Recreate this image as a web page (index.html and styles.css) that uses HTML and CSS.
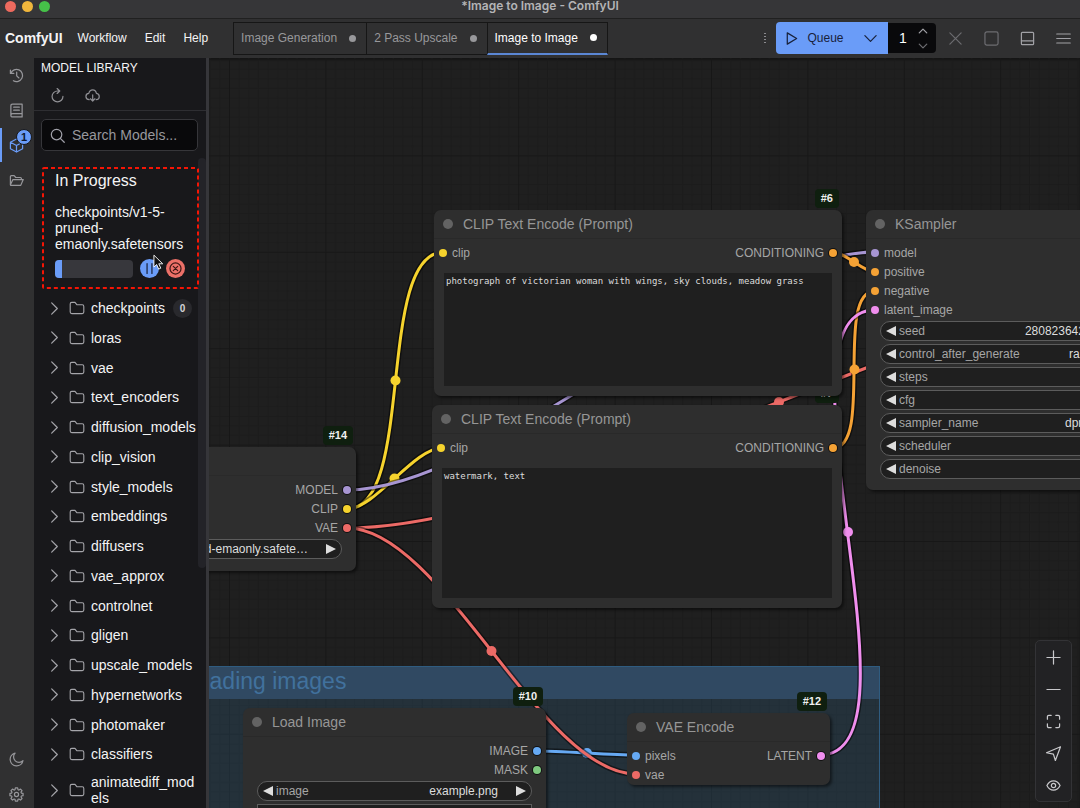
FILE: index.html
```html
<!DOCTYPE html>
<html lang="en">

<head>
    <meta charset="UTF-8">
    <title>*Image to Image - ComfyUI</title>
    <link rel="stylesheet" href="styles.css">
</head>

<body>
    <!-- shared icons -->
    <svg class="sprite" aria-hidden="true">
        <symbol id="chevron" viewBox="0 0 16 16"><path d="M5 2l6 6-6 6" /></symbol>
        <symbol id="folder" viewBox="0 0 16 16"><path d="M1.200 12V4Q1.200 2.400 2.800 2.400H6l2 2.400h5.200q1.600 0 1.600 1.600V12q0 1.600-1.600 1.600H2.800Q1.200 13.600 1.200 12z" /></symbol>
    </svg>

    <header class="titlebar">
        <div class="lights">
            <span class="light red"></span>
            <span class="light yellow"></span>
            <span class="light green"></span>
        </div>
        <div class="window-title">*Image to Image - ComfyUI</div>
    </header>

    <div class="topbar">
        <h1 class="brand">ComfyUI</h1>
        <nav class="menu">
            <button>Workflow</button>
            <button>Edit</button>
            <button>Help</button>
        </nav>
        <div class="tabs">
            <button class="tab">Image Generation<span class="unsaved"></span></button>
            <button class="tab">2 Pass Upscale<span class="unsaved"></span></button>
            <button class="tab active">Image to Image<span class="unsaved"></span></button>
        </div>
        <div class="actions">
            <span class="grip"><i></i><i></i><i></i><i></i></span>
            <div class="queue">
                <button class="queue-run">
                    <svg class="icon" viewBox="0 0 16 16"><path d="M3.500 2v12l10-6z" /></svg>
                    Queue
                </button>
                <button class="queue-more" aria-label="Queue options">
                    <svg class="icon" viewBox="0 0 16 16"><path d="M2 5l6 6 6-6" /></svg>
                </button>
                <div class="batch">
                    <input class="batch-count" type="text" value="1" aria-label="Batch count">
                    <div class="batch-steps">
                        <button aria-label="Increase"><svg class="icon" viewBox="0 0 16 16"><path d="M2 11l6-6 6 6" /></svg></button>
                        <button class="dim" aria-label="Decrease"><svg class="icon" viewBox="0 0 16 16"><path d="M2 5l6 6 6-6" /></svg></button>
                    </div>
                </div>
            </div>
            <button class="tool dim" aria-label="Interrupt"><svg class="icon" viewBox="0 0 16 16"><path d="M2 2l12 12M14 2L2 14" /></svg></button>
            <button class="tool dim" aria-label="Clear queue"><svg class="icon" viewBox="0 0 16 16"><rect x="1" y="1" width="14" height="14" rx="2" /></svg></button>
            <button class="tool" aria-label="Toggle bottom panel"><svg class="icon" viewBox="0 0 16 16"><rect x="1.500" y="1.500" width="13" height="13" rx="1" /><path d="M1.500 10.500h13" /></svg></button>
            <button class="tool" aria-label="Menu"><svg class="icon" viewBox="0 0 16 16"><path d="M.800 3.200h14.400M.800 8h14.400M.800 12.800h14.400" /></svg></button>
        </div>
    </div>

    <div class="workspace">
        <nav class="rail">
            <button aria-label="History"><svg class="icon" viewBox="0 0 16 16"><path d="M1.500 2.200v3.600h3.600M1.900 5.600A6.500 6.500 0 1 1 4.700 13.600M8.200 4.500V8.400l2.400 2.200" /></svg></button>
            <button aria-label="Node library"><svg class="icon" viewBox="0 0 16 16"><path d="M2 13.200V3Q2 1.200 3.800 1.200H14v13.600H3.800Q2 14.800 2 13.200T3.800 11.400H14M5 4.500h6M5 7.700h6" /></svg></button>
            <button class="active" aria-label="Model library">
                <svg class="icon" viewBox="0 0 16 16"><path d="M8 1L14.500 4.500V11.500L8 15 1.500 11.500V4.500zM1.500 4.500L8 8l6.500-3.500M8 8v7" /></svg>
                <span class="count">1</span>
            </button>
            <button aria-label="Workflows"><svg class="icon" viewBox="0 0 16 16"><path d="M1.500 12.500V3.800Q1.500 2.800 2.500 2.800H5.500l1.700 2H12.200q1 0 1 1V7M1.500 12.500L4.200 7h11L12.500 13.200H2.200Q1.500 13.200 1.500 12.500" /></svg></button>
            <span class="spacer"></span>
            <button aria-label="Toggle theme"><svg class="icon" viewBox="0 0 16 16"><path d="M6.500 1.200A6.900 6.900 0 1 0 14.900 9.300 5.500 5.500 0 0 1 6.500 1.200z" /></svg></button>
            <button aria-label="Settings"><svg class="icon" viewBox="0 0 16 16"><circle cx="8" cy="8" r="2.200" /><path d="M6.800 1h2.400l.4 1.900 1 .4 1.700-1.100 1.600 1.600-1.100 1.700.4 1 1.800.4v2.300l-1.800.4-.4 1 1.100 1.700-1.600 1.600-1.700-1.100-1 .4L9.200 15H6.800l-.4-1.800-1-.4-1.700 1.100-1.600-1.600 1.100-1.700-.4-1L1 9.200V6.900l1.800-.4.4-1-1.100-1.700 1.600-1.600 1.700 1.100 1-.4z" /></svg></button>
        </nav>

        <aside class="sidebar">
            <div class="sidebar-head">
                <h2>MODEL LIBRARY</h2>
                <div class="sidebar-tools">
                    <button aria-label="Refresh"><svg class="icon" viewBox="0 0 16 16"><path d="M8 3.200A5.800 5.800 0 1 0 13.800 9M8 3.200H10.200M7.600.6l2.800 2.600L7.600 5.800" /></svg></button>
                    <button aria-label="Load all folders"><svg class="icon" viewBox="0 0 16 16"><path d="M4.500 12.400Q1 12 1 9t3-3.200Q5 2 8.200 2t4 3.800Q15.200 6.200 15.200 9.200T12 12.400M8.200 7.200v6.600M5.800 11.500l2.400 2.400 2.400-2.400" /></svg></button>
                </div>
            </div>
            <label class="search">
                <svg class="icon" viewBox="0 0 16 16"><circle cx="7" cy="7" r="5.600" /><path d="M11 11l4.200 4.200" /></svg>
                <input type="text" placeholder="Search Models..." aria-label="Search Models">
            </label>
            <div class="scroll">
                <section class="downloads">
                    <svg class="outline" aria-hidden="true"><rect x="1" y="1" rx="1" /></svg>
                    <h3>In Progress</h3>
                    <p>checkpoints/v1-5-pruned-emaonly.safetensors</p>
                    <div class="download-row">
                        <div class="bar"><div class="bar-fill" style="width: 9%"></div></div>
                        <button class="pause" aria-label="Pause"><svg class="icon" viewBox="0 0 16 16"><path d="M5 2v12M11 2v12" /></svg></button>
                        <button class="cancel" aria-label="Cancel"><svg class="icon" viewBox="0 0 16 16"><circle cx="8" cy="8" r="6.800" /><path d="M5.300 5.300l5.400 5.400M10.700 5.300l-5.400 5.400" /></svg></button>
                    </div>
                    <svg class="cursor" viewBox="0 0 12 18"><path d="M1 1v13l3-2.800 2.200 5 2.300-1-2.200-4.800h4.300z" /></svg>
                </section>
                <ul class="tree">
                    <li><svg class="icon"><use href="#chevron" /></svg><svg class="icon folder"><use href="#folder" /></svg><span>checkpoints</span><b>0</b></li>
                    <li><svg class="icon"><use href="#chevron" /></svg><svg class="icon folder"><use href="#folder" /></svg><span>loras</span></li>
                    <li><svg class="icon"><use href="#chevron" /></svg><svg class="icon folder"><use href="#folder" /></svg><span>vae</span></li>
                    <li><svg class="icon"><use href="#chevron" /></svg><svg class="icon folder"><use href="#folder" /></svg><span>text_encoders</span></li>
                    <li><svg class="icon"><use href="#chevron" /></svg><svg class="icon folder"><use href="#folder" /></svg><span>diffusion_models</span></li>
                    <li><svg class="icon"><use href="#chevron" /></svg><svg class="icon folder"><use href="#folder" /></svg><span>clip_vision</span></li>
                    <li><svg class="icon"><use href="#chevron" /></svg><svg class="icon folder"><use href="#folder" /></svg><span>style_models</span></li>
                    <li><svg class="icon"><use href="#chevron" /></svg><svg class="icon folder"><use href="#folder" /></svg><span>embeddings</span></li>
                    <li><svg class="icon"><use href="#chevron" /></svg><svg class="icon folder"><use href="#folder" /></svg><span>diffusers</span></li>
                    <li><svg class="icon"><use href="#chevron" /></svg><svg class="icon folder"><use href="#folder" /></svg><span>vae_approx</span></li>
                    <li><svg class="icon"><use href="#chevron" /></svg><svg class="icon folder"><use href="#folder" /></svg><span>controlnet</span></li>
                    <li><svg class="icon"><use href="#chevron" /></svg><svg class="icon folder"><use href="#folder" /></svg><span>gligen</span></li>
                    <li><svg class="icon"><use href="#chevron" /></svg><svg class="icon folder"><use href="#folder" /></svg><span>upscale_models</span></li>
                    <li><svg class="icon"><use href="#chevron" /></svg><svg class="icon folder"><use href="#folder" /></svg><span>hypernetworks</span></li>
                    <li><svg class="icon"><use href="#chevron" /></svg><svg class="icon folder"><use href="#folder" /></svg><span>photomaker</span></li>
                    <li><svg class="icon"><use href="#chevron" /></svg><svg class="icon folder"><use href="#folder" /></svg><span>classifiers</span></li>
                    <li><svg class="icon"><use href="#chevron" /></svg><svg class="icon folder"><use href="#folder" /></svg><span>animatediff_models</span></li>
                </ul>
                <div class="scroll-thumb"></div>
            </div>
        </aside>

        <main class="canvas">
            <svg class="layer" aria-hidden="true">
                <defs>
                    <pattern id="grid" x="20" y="1" width="96.400" height="96.400" patternUnits="userSpaceOnUse" viewBox="0 0 100 100">
                        <path class="grid-minor" d="M10.500 0V100M20.500 0V100M30.500 0V100M40.500 0V100M50.500 0V100M60.500 0V100M70.500 0V100M80.500 0V100M90.500 0V100M0 10.500H100M0 20.500H100M0 30.500H100M0 40.500H100M0 50.500H100M0 60.500H100M0 70.500H100M0 80.500H100M0 90.500H100" />
                        <path class="grid-major" d="M.500 0V100M0 .500H100" />
                    </pattern>
                </defs>
                <rect width="100%" height="100%" fill="url(#grid)" />
            </svg>

            <section class="group">
                <h2>Loading images</h2>
            </section>

            <!-- links between slots -->
            <svg class="layer links" aria-hidden="true">
                <g transform="translate(-209 -58)">
                    <g class="clip">
                        <path class="shade" d="M347 509C416 509 375 252 444 252" />
                        <path d="M347 509C416 509 375 252 444 252" />
                        <circle cx="395.500" cy="380.500" r="5" />
                        <path class="shade" d="M347 509C375 509 414 448 442 448" />
                        <path d="M347 509C375 509 414 448 442 448" />
                        <circle cx="394.500" cy="478.500" r="5" />
                    </g>
                    <g class="model">
                        <path class="shade" d="M347 490C492 490 730 252 875 252" />
                        <path d="M347 490C492 490 730 252 875 252" />
                    </g>
                    <g class="image">
                        <path class="shade" d="M537 751C562 751 611 755 636 755" />
                        <path d="M537 751C562 751 611 755 636 755" />
                        <circle cx="587" cy="753" r="5" />
                    </g>
                    <g class="vae">
                        <path class="shade" d="M347 528C572 528 986 276 1211 276" />
                        <path d="M347 528C572 528 986 276 1211 276" />
                        <circle cx="779" cy="402" r="5" />
                        <path class="shade" d="M347 528C442 528 541 774 636 774" />
                        <path d="M347 528C442 528 541 774 636 774" />
                        <circle cx="491.500" cy="651" r="5" />
                    </g>
                    <g class="conditioning">
                        <path class="shade" d="M833 252C845 252 863 272 875 272" />
                        <path d="M833 252C845 252 863 272 875 272" />
                        <circle cx="854" cy="262" r="5" />
                        <path class="shade" d="M833 448C874 448 834 291 875 291" />
                        <path d="M833 448C874 448 834 291 875 291" />
                        <circle cx="854.500" cy="369.500" r="5" />
                    </g>
                    <g class="latent">
                        <path class="shade" d="M820 755C932 755 763 310 875 310" />
                        <path d="M820 755C932 755 763 310 875 310" />
                        <circle cx="848" cy="532" r="5" />
                    </g>
                </g>
            </svg>

            <article class="node node-checkpoint">
                <span class="badge">#14</span>
                <h3></h3>
                <div class="slots">
                    <ul></ul>
                    <ul class="out">
                        <li>MODEL<i class="dot model"></i></li>
                        <li>CLIP<i class="dot clip"></i></li>
                        <li>VAE<i class="dot vae"></i></li>
                    </ul>
                </div>
                <div class="widgets">
                    <div class="widget">
                        <button class="prev" aria-label="Previous"></button>
                        <select aria-label="Checkpoint"><option>v1-5-pruned-emaonly.safete…</option></select>
                        <button class="next" aria-label="Next"></button>
                    </div>
                </div>
            </article>

            <article class="node node-negative">
                <span class="badge">#7</span>
                <h3>CLIP Text Encode (Prompt)</h3>
                <div class="slots">
                    <ul>
                        <li><i class="dot clip"></i>clip</li>
                    </ul>
                    <ul class="out">
                        <li>CONDITIONING<i class="dot conditioning"></i></li>
                    </ul>
                </div>
                <textarea aria-label="Negative prompt" spellcheck="false">watermark, text</textarea>
            </article>

            <article class="node node-positive">
                <span class="badge">#6</span>
                <h3>CLIP Text Encode (Prompt)</h3>
                <div class="slots">
                    <ul>
                        <li><i class="dot clip"></i>clip</li>
                    </ul>
                    <ul class="out">
                        <li>CONDITIONING<i class="dot conditioning"></i></li>
                    </ul>
                </div>
                <textarea aria-label="Positive prompt" spellcheck="false">photograph of victorian woman with wings, sky clouds, meadow grass</textarea>
            </article>

            <article class="node node-sampler">
                <h3>KSampler</h3>
                <div class="slots">
                    <ul>
                        <li><i class="dot model"></i>model</li>
                        <li><i class="dot conditioning"></i>positive</li>
                        <li><i class="dot conditioning"></i>negative</li>
                        <li><i class="dot latent"></i>latent_image</li>
                    </ul>
                </div>
                <div class="widgets">
                    <div class="widget">
                        <button class="prev" aria-label="Decrease seed"></button>
                        <label for="seed">seed</label>
                        <input id="seed" type="text" value="280823642470253">
                        <button class="next" aria-label="Increase seed"></button>
                    </div>
                    <div class="widget">
                        <button class="prev" aria-label="Previous"></button>
                        <label for="control">control_after_generate</label>
                        <select id="control"><option>randomize</option></select>
                        <button class="next" aria-label="Next"></button>
                    </div>
                    <div class="widget">
                        <button class="prev" aria-label="Decrease steps"></button>
                        <label for="steps">steps</label>
                        <input id="steps" type="text" value="20">
                        <button class="next" aria-label="Increase steps"></button>
                    </div>
                    <div class="widget">
                        <button class="prev" aria-label="Decrease cfg"></button>
                        <label for="cfg">cfg</label>
                        <input id="cfg" type="text" value="8.0">
                        <button class="next" aria-label="Increase cfg"></button>
                    </div>
                    <div class="widget">
                        <button class="prev" aria-label="Previous sampler"></button>
                        <label for="sampler">sampler_name</label>
                        <select id="sampler"><option>dpmpp_2m</option></select>
                        <button class="next" aria-label="Next sampler"></button>
                    </div>
                    <div class="widget">
                        <button class="prev" aria-label="Previous scheduler"></button>
                        <label for="scheduler">scheduler</label>
                        <select id="scheduler"><option>normal</option></select>
                        <button class="next" aria-label="Next scheduler"></button>
                    </div>
                    <div class="widget">
                        <button class="prev" aria-label="Decrease denoise"></button>
                        <label for="denoise">denoise</label>
                        <input id="denoise" type="text" value="0.87">
                        <button class="next" aria-label="Increase denoise"></button>
                    </div>
                </div>
            </article>

            <article class="node node-load">
                <span class="badge">#10</span>
                <h3>Load Image</h3>
                <div class="slots">
                    <ul></ul>
                    <ul class="out">
                        <li>IMAGE<i class="dot image"></i></li>
                        <li>MASK<i class="dot mask"></i></li>
                    </ul>
                </div>
                <div class="widgets">
                    <div class="widget">
                        <button class="prev" aria-label="Previous image"></button>
                        <label for="image">image</label>
                        <select id="image"><option>example.png</option></select>
                        <button class="next" aria-label="Next image"></button>
                    </div>
                    <button class="upload" aria-label="Upload image"></button>
                </div>
            </article>

            <article class="node node-encode">
                <span class="badge">#12</span>
                <h3>VAE Encode</h3>
                <div class="slots">
                    <ul>
                        <li><i class="dot image"></i>pixels</li>
                        <li><i class="dot vae"></i>vae</li>
                    </ul>
                    <ul class="out">
                        <li>LATENT<i class="dot latent"></i></li>
                    </ul>
                </div>
            </article>

            <div class="view-tools">
                <button aria-label="Zoom in"><svg class="icon" viewBox="0 0 16 16"><path d="M8 1v14M1 8h14" /></svg></button>
                <button aria-label="Zoom out"><svg class="icon" viewBox="0 0 16 16"><path d="M1 8h14" /></svg></button>
                <button aria-label="Fit view"><svg class="icon" viewBox="0 0 16 16"><path d="M1.500 5.500V3q0-1.500 1.500-1.500H5.500M10.500 1.500H13q1.500 0 1.500 1.500V5.500M14.500 10.500V13q0 1.500-1.500 1.500H10.500M5.500 14.500H3q-1.500 0-1.500-1.500V10.500" /></svg></button>
                <button aria-label="Select mode"><svg class="icon" viewBox="0 0 16 16"><path d="M15.500.800L.500 7.200l7.400 1.400L10 15.500z" /></svg></button>
                <button aria-label="Toggle links"><svg class="icon" viewBox="0 0 16 16"><path d="M1 8Q3.500 3 8 3t7 5q-2.500 5-7 5T1 8z" /><circle cx="8" cy="8" r="2.300" /></svg></button>
            </div>
        </main>
    </div>
</body>

</html>
```

FILE: styles.css
```css
* {
    box-sizing: border-box;
}

body {
    margin: 0;
    height: 100vh;
    display: flex;
    flex-direction: column;
    overflow: hidden;
    background-color: #1e1e1e;
    color: #f4f4f5;
    font-family: "Liberation Sans", Arial, sans-serif;
    font-size: 12px;
}

h1,
h2,
h3,
p,
ul {
    margin: 0;
    padding: 0;
    list-style: none;
}

button,
input,
select,
textarea {
    font: inherit;
    color: inherit;
    background: none;
    border: none;
    padding: 0;
    margin: 0;
    outline: none;
}

button {
    display: flex;
    align-items: center;
    justify-content: center;
}

.sprite {
    position: absolute;
    width: 0;
    height: 0;
}

.icon {
    width: 15px;
    height: 15px;
    flex: none;
    fill: none;
    stroke: currentColor;
    stroke-width: 1.3;
    stroke-linecap: round;
    stroke-linejoin: round;
}

/* Window title bar */
.titlebar {
    flex: none;
    height: 19px;
    padding: 0 5px 7px;
    display: grid;
    grid-template-columns: 1fr auto 1fr;
    align-items: center;
    background-color: #363638;
    border-bottom: 1px solid #202020;
}

.lights {
    display: flex;
    gap: 6px;
}

.light {
    width: 11px;
    height: 11px;
    border-radius: 50%;
}

.light.red {
    background-color: #ed6a5e;
}

.light.yellow {
    background-color: #f0b63c;
}

.light.green {
    background-color: #46c149;
}

.window-title {
    font-family: Inter, sans-serif;
    font-weight: 600;
    line-height: 12px;
    color: #b4b4b6;
}

/* Top menu */
.topbar {
    flex: none;
    height: 39px;
    padding: 0 9px 1px 5px;
    display: flex;
    align-items: center;
    background-color: #303031;
}

.brand {
    font-size: 14px;
}

.menu {
    display: flex;
    gap: 18px;
    margin-left: 15px;
}

.tabs {
    display: flex;
    margin-left: 26px;
}

.tab {
    height: 33px;
    padding: 0 10px 0 7px;
    gap: 12px;
    margin-left: -1px;
    border: 1px solid #161616;
    color: #98989b;
}

.tab.active {
    color: #ffffff;
    border-bottom: 2px solid #5b87d4;
}

.unsaved {
    width: 7px;
    height: 7px;
    border-radius: 50%;
    background-color: currentColor;
}

.actions {
    display: flex;
    align-items: center;
    margin-left: auto;
    color: #a1a1a6;
}

.grip {
    display: flex;
    flex-direction: column;
    gap: 2px;
    margin-right: 10px;
}

.grip i {
    width: 2px;
    height: 1px;
    background-color: #8b8b8f;
}

.queue {
    display: flex;
    align-items: center;
    margin-right: 11px;
}

.queue-run {
    height: 32px;
    width: 76px;
    gap: 8px;
    border-radius: 4px 0 0 4px;
    background-color: #6a9cf8;
    color: #18213a;
}

.queue-more {
    height: 32px;
    width: 36px;
    background-color: #6a9cf8;
    color: #18213a;
}

.batch {
    display: flex;
    align-items: center;
    width: 48px;
    height: 30px;
    border-radius: 0 4px 4px 0;
    background-color: #09090b;
}

.batch-count {
    width: 30px;
    font-size: 14px;
    text-align: center;
    color: #ffffff;
}

.batch-steps {
    display: flex;
    flex-direction: column;
    gap: 5px;
}

.batch-steps .icon {
    width: 10px;
    height: 10px;
    stroke-width: 2;
}

.dim {
    color: #6c6c70;
}

.tool {
    width: 16px;
    height: 16px;
}

.tool + .tool {
    margin-left: 20px;
}

/* Icon rail */
.workspace {
    flex: 1;
    min-height: 0;
    display: grid;
    grid-template-columns: 34px 175px 1fr;
}

.rail {
    display: flex;
    flex-direction: column;
    gap: 7px;
    padding: 3px 0 0;
    background-color: #303031;
    color: #97979b;
}

.rail button {
    position: relative;
    height: 28px;
    padding-right: 2px;
}

.rail .active {
    color: #6a9cf8;
}

.rail .active::before {
    content: "";
    position: absolute;
    left: 0;
    top: -3px;
    bottom: -3px;
    width: 2px;
    background-color: #6a9cf8;
}

.count {
    position: absolute;
    left: 16px;
    top: -2px;
    width: 16px;
    height: 16px;
    border: 1px solid #18181b;
    border-radius: 50%;
    background-color: #6a9cf8;
    color: #0d1730;
    font-size: 11px;
    font-weight: bold;
    line-height: 14px;
    text-align: center;
}

.spacer {
    flex: 1;
}

/* Model library */
.sidebar {
    display: flex;
    flex-direction: column;
    min-height: 0;
    background-color: #18181b;
    border-right: 3px solid #36363a;
}

.sidebar-head {
    height: 53px;
    padding: 2px 7px 0;
    border-bottom: 1px solid #2e2e32;
}

.sidebar-head h2 {
    font-size: 12px;
    font-weight: normal;
    line-height: 16px;
}

.sidebar-tools {
    display: flex;
    gap: 20px;
    padding: 12px 0 0 9px;
    color: #8f8f94;
}

.search {
    display: flex;
    align-items: center;
    gap: 7px;
    height: 32px;
    margin: 8px 8px 0 7px;
    padding: 0 8px;
    border: 1px solid #36363a;
    border-radius: 5px;
    background-color: #09090b;
    color: #a1a1aa;
    font-size: 14px;
}

.search input {
    flex: 1;
    min-width: 0;
}

.search input::placeholder {
    color: #98989d;
}

.scroll {
    position: relative;
    flex: 1;
    min-height: 0;
    display: flex;
    flex-direction: column;
    margin-top: 7px;
    padding: 9px 0 2px 8px;
    font-size: 14px;
}

.scroll-thumb {
    position: absolute;
    top: 0;
    right: 0;
    width: 8px;
    height: 63%;
    border-radius: 4px;
    background-color: #232328;
    z-index: 0;
}

.downloads {
    position: relative;
    z-index: 1;
    margin-right: 7px;
    padding: 5px 14px 11px 13px;
}

.outline {
    position: absolute;
    left: 0;
    top: 0;
    width: 100%;
    height: 100%;
}

.outline rect {
    width: calc(100% - 2px);
    height: calc(100% - 2px);
    fill: none;
    stroke: #f51505;
    stroke-width: 2;
    stroke-dasharray: 4 3;
}

.downloads h3 {
    font-size: 16px;
    font-weight: normal;
    line-height: 18px;
}

.downloads p {
    margin-top: 14px;
    line-height: 16px;
    white-space: nowrap;
    white-space: normal;
    margin-right: -4px;
}

.download-row {
    display: flex;
    align-items: center;
    gap: 7px;
    margin-top: 7px;
}

.bar {
    flex: 1;
    height: 18px;
    border-radius: 4px;
    overflow: hidden;
    background-color: #37373c;
}

.bar-fill {
    height: 100%;
    background-color: #6a9cf8;
}

.pause,
.cancel {
    width: 19px;
    height: 19px;
    border-radius: 50%;
    color: #18213a;
}

.pause {
    background-color: #6a9cf8;
}

.cancel {
    background-color: #ec7068;
    color: #3d1614;
}

.pause .icon,
.cancel .icon {
    width: 13px;
    height: 13px;
    stroke-width: 1.5;
}

.cursor {
    position: absolute;
    left: 111px;
    top: 87px;
    width: 11px;
    height: 17px;
    fill: #111111;
    stroke: #ffffff;
}

.tree {
    position: relative;
    z-index: 1;
    flex: 1;
    display: flex;
    flex-direction: column;
    justify-content: space-between;
    padding: 9px 8px 0 5px;
}

.tree li {
    display: flex;
    align-items: center;
    min-height: 20px;
    line-height: 16px;
    color: #a5a5aa;
}

.tree .folder {
    width: 16px;
    height: 16px;
    margin: 0 6px 0 7px;
    stroke-width: 1.1;
}

.tree span {
    min-width: 0;
    overflow-wrap: anywhere;
    color: #f4f4f5;
}

.tree b {
    width: 19px;
    height: 19px;
    margin-left: 8px;
    border-radius: 50%;
    background-color: #29292d;
    color: #d4d4d8;
    font-size: 10px;
    line-height: 19px;
    text-align: center;
}

/* Graph canvas */
.canvas {
    position: relative;
    overflow: hidden;
    background-color: #1f1f1f;
    box-shadow: inset 0 2px 2px #161616;
}

.layer {
    position: absolute;
    width: 100%;
    height: 100%;
}

.grid-minor,
.grid-major {
    fill: none;
    stroke: #1b1b1b;
}

.grid-major {
    stroke: #171717;
}

.group {
    position: absolute;
    left: -40px;
    top: 608px;
    width: 711px;
    height: 400px;
    border: 1px solid #2f5c80;
    background-color: rgba(42, 72, 92, 0.45);
}

.group h2 {
    height: 32px;
    padding-left: 14px;
    background-color: #304962;
    color: #41719d;
    font-size: 23px;
    font-weight: normal;
    line-height: 29px;
}

.links path {
    fill: none;
    stroke: var(--slot);
    stroke-width: 3;
}

.links .shade {
    stroke: rgba(0, 0, 0, 0.5);
    stroke-width: 6;
}

.links circle {
    fill: var(--slot);
}

.clip {
    --slot: #f6d32d;
}

.model {
    --slot: #a795d2;
}

.vae {
    --slot: #ec6a66;
}

.conditioning {
    --slot: #f5a235;
}

.latent {
    --slot: #f08eee;
}

.image {
    --slot: #66a9f3;
}

.mask {
    --slot: #7fc97f;
}

.node {
    position: absolute;
    display: flex;
    flex-direction: column;
    border-radius: 7px;
    background-color: #2e2e2e;
    box-shadow: 2px 2px 3px rgba(0, 0, 0, 0.5);
    color: #a6a6a6;
}

.node h3 {
    flex: none;
    display: flex;
    align-items: center;
    gap: 10px;
    height: 29px;
    padding-left: 9px;
    border-bottom: 1px solid #292929;
    color: #969696;
    font-size: 14px;
    font-weight: normal;
}

.node h3::before {
    content: "";
    width: 10px;
    height: 10px;
    border-radius: 50%;
    background-color: #636363;
}

.badge {
    position: absolute;
    right: 3px;
    top: -21px;
    height: 19px;
    padding: 0 6px;
    border-radius: 4px;
    background-color: #0f1f0f;
    color: #f0f0f0;
    font-size: 11px;
    font-weight: bold;
    line-height: 19px;
}

.slots {
    display: flex;
    justify-content: space-between;
    padding: 4px 5px 2px;
}

.slots li {
    display: flex;
    align-items: center;
    gap: 5px;
    height: 19px;
}

.out li {
    justify-content: flex-end;
}

.dot {
    width: 8px;
    height: 8px;
    border-radius: 50%;
    background-color: var(--slot);
}

.out .dot {
    box-shadow: 0 0 0 1px #111111;
}

.node textarea {
    flex: 1;
    margin: 9px 10px 10px;
    padding: 2px;
    resize: none;
    overflow: hidden;
    background-color: #1f1f1f;
    color: #dcdcdc;
    font-family: "DejaVu Sans Mono", monospace;
    font-size: 9px;
    line-height: 12px;
}

.widgets {
    display: flex;
    flex-direction: column;
    gap: 3px;
    padding: 0 14px;
}

.widget {
    display: flex;
    align-items: center;
    height: 20px;
    padding: 0 5px;
    border: 1px solid #5c5c5c;
    border-radius: 10px;
    background-color: #1f1f1f;
}

.widget label {
    margin-left: 3px;
}

.widget input,
.widget select {
    flex: 1;
    min-width: 0;
    height: 18px;
    margin-right: 18px;
    appearance: none;
    text-align: right;
    text-align-last: right;
    color: #dddddd;
}

.prev,
.next {
    flex: none;
    width: 10px;
    height: 10px;
    background-color: #dddddd;
    clip-path: polygon(0 50%, 100% 0, 100% 100%);
}

.next {
    clip-path: polygon(0 0, 100% 50%, 0 100%);
}

.upload {
    height: 20px;
    border: 1px solid #5c5c5c;
    background-color: #1f1f1f;
}

/* Node placement on the canvas */
.node-checkpoint {
    left: -156px;
    top: 389px;
    width: 303px;
    height: 124px;
}

.node-negative {
    left: 223px;
    top: 347px;
    width: 410px;
    height: 203px;
}

.node-positive {
    left: 225px;
    top: 152px;
    width: 408px;
    height: 186px;
}

.node-sampler {
    left: 657px;
    top: 152px;
    width: 307px;
    height: 280px;
}

.node-load {
    left: 34px;
    top: 650px;
    width: 303px;
    height: 320px;
}

.node-encode {
    left: 418px;
    top: 655px;
    width: 203px;
    height: 72px;
}

.node-checkpoint h3 {
    border-bottom-color: #2a2a2a;
}

.view-tools {
    position: absolute;
    right: 8px;
    bottom: 6px;
    width: 37px;
    border: 1px solid #333336;
    border-radius: 5px;
    background-color: #222224;
    color: #c9c9cc;
}

.view-tools button {
    width: 100%;
    height: 32px;
}
```
